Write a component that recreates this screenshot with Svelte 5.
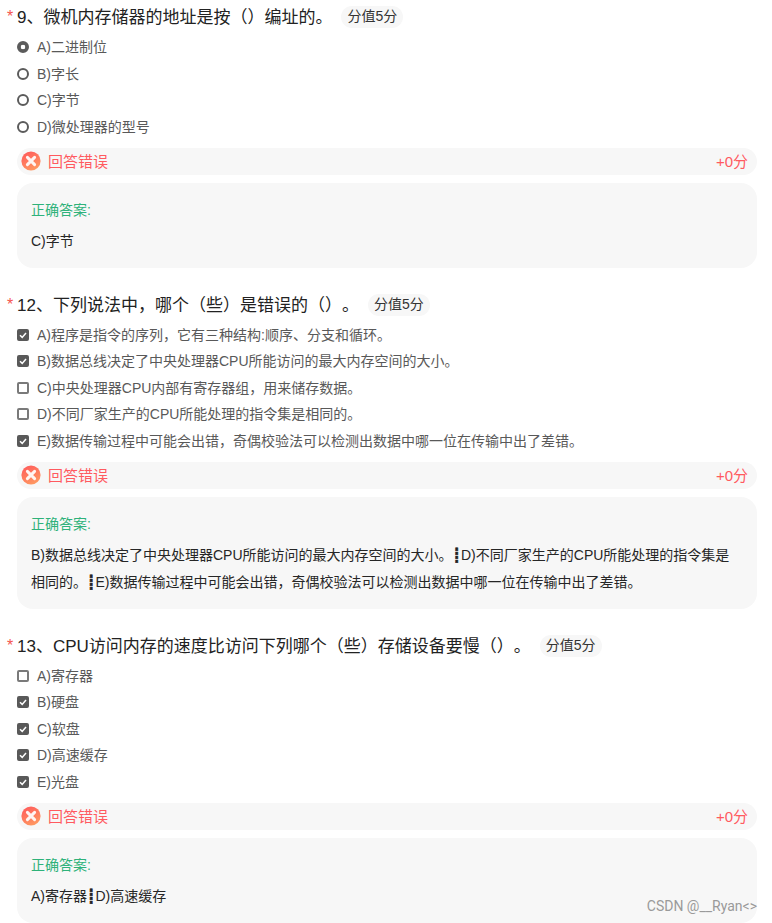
<script>
    const questions = [
        {
            no: 9,
            title: '微机内存储器的地址是按（）编址的。',
            type: 'radio',
            options: [
                { text: 'A)二进制位', checked: true },
                { text: 'B)字长' },
                { text: 'C)字节' },
                { text: 'D)微处理器的型号' }
            ],
            answers: ['C)字节']
        },
        {
            no: 12,
            title: '下列说法中，哪个（些）是错误的（）。',
            type: 'check',
            options: [
                { text: 'A)程序是指令的序列，它有三种结构:顺序、分支和循环。', checked: true },
                { text: 'B)数据总线决定了中央处理器CPU所能访问的最大内存空间的大小。', checked: true },
                { text: 'C)中央处理器CPU内部有寄存器组，用来储存数据。' },
                { text: 'D)不同厂家生产的CPU所能处理的指令集是相同的。' },
                { text: 'E)数据传输过程中可能会出错，奇偶校验法可以检测出数据中哪一位在传输中出了差错。', checked: true }
            ],
            answers: [
                'B)数据总线决定了中央处理器CPU所能访问的最大内存空间的大小。',
                'D)不同厂家生产的CPU所能处理的指令集是相同的。',
                'E)数据传输过程中可能会出错，奇偶校验法可以检测出数据中哪一位在传输中出了差错。'
            ]
        },
        {
            no: 13,
            title: 'CPU访问内存的速度比访问下列哪个（些）存储设备要慢（）。',
            type: 'check',
            options: [
                { text: 'A)寄存器' },
                { text: 'B)硬盘', checked: true },
                { text: 'C)软盘', checked: true },
                { text: 'D)高速缓存', checked: true },
                { text: 'E)光盘', checked: true }
            ],
            answers: ['A)寄存器', 'D)高速缓存']
        }
    ];
</script>

<div class="page">
    {#each questions as q}
        <section class="question">
            <div class="title">
                <span class="star">*</span>
                <span class="name">{q.no}、{q.title}</span>
                <span class="score">分值5分</span>
            </div>

            <div class="options">
                {#each q.options as opt}
                    <div class="option">
                        {#if q.type === 'radio'}
                            <span class="radio" class:on={opt.checked}></span>
                        {:else}
                            <span class="box" class:on={opt.checked}>
                                {#if opt.checked}
                                    <svg viewBox="0 0 12 12" width="12" height="12">
                                        <path d="M3 6.3 L5.2 8.4 L9 3.9" fill="none" stroke="#fff" stroke-width="1.5" />
                                    </svg>
                                {/if}
                            </span>
                        {/if}
                        <span class="opt-text">{opt.text}</span>
                    </div>
                {/each}
            </div>

            <div class="result">
                <span class="verdict">
                    <svg class="wrong" viewBox="0 0 20 20" width="20" height="20">
                        <defs>
                            <linearGradient id="wrong-{q.no}" x1="0.2" y1="0" x2="0.7" y2="1">
                                <stop offset="0" stop-color="#ff5b5b" />
                                <stop offset="1" stop-color="#ff9b62" />
                            </linearGradient>
                        </defs>
                        <circle cx="10" cy="10" r="9.6" fill="url(#wrong-{q.no})" />
                        <path d="M6.4 6.4 L13.6 13.6 M13.6 6.4 L6.4 13.6" stroke="#fff" stroke-width="3" stroke-linecap="round" opacity="0.92" />
                    </svg>
                    <span class="lift">回答错误</span>
                </span>
                <span class="lift">+0分</span>
            </div>

            <div class="answer">
                <div class="label">正确答案:</div>
                <div class="text">
                    {#each q.answers as a, i}{#if i > 0}<span class="sep">┋</span>{/if}{a}{/each}
                </div>
            </div>
        </section>
    {/each}
    <span class="mark">CSDN @__Ryan&lt;&gt;</span>
</div>

<style>
    :global(body) {
        margin: 0;
        background: #fff;
    }

    .page {
        position: relative;
        width: 772px;
        height: 923px;
        overflow: hidden;
        padding: 5px 15px 0 17px;
        box-sizing: border-box;
        font-family: "Liberation Sans", "Noto Sans CJK SC", sans-serif;
        color: #262626;
        text-spacing-trim: space-all;
    }

    .question {
        margin-bottom: 24.5px;
    }

    .title {
        position: relative;
        display: flex;
        align-items: center;
        height: 24px;
        font-size: 17px;
        color: #222;
    }

    .name {
        padding-bottom: 3px;
    }

    .star {
        position: absolute;
        left: -10px;
        top: 3px;
        color: #f5554f;
        font-size: 16px;
    }

    .score {
        margin-left: 9px;
        padding: 0 6px 2px;
        height: 20px;
        line-height: 20px;
        border-radius: 11px;
        background: #f7f7f7;
        font-size: 14px;
        color: #333;
    }

    .options {
        margin-top: 5px;
    }

    .option {
        display: flex;
        align-items: center;
        gap: 8px;
        height: 26.5px;
        font-size: 14px;
        color: #595959;
    }

    .opt-text {
        padding-bottom: 2px;
    }

    .radio {
        width: 8px;
        height: 8px;
        border: 2px solid #5b5b5b;
        border-radius: 50%;
        flex: none;
        background: #fff;
    }

    .radio.on {
        background: radial-gradient(circle, #fff 0 2px, #5b5b5b 2.6px);
    }

    .box {
        width: 8px;
        height: 8px;
        border: 2px solid #7a7a7a;
        border-radius: 2px;
        flex: none;
        position: relative;
    }

    .box.on {
        background: #595959;
        border-color: #595959;
    }

    .box svg {
        position: absolute;
        left: -2px;
        top: -2px;
    }

    .result {
        display: flex;
        align-items: center;
        justify-content: space-between;
        height: 27px;
        margin-top: 8px;
        padding: 0 9px 0 4px;
        border-radius: 14px;
        background: #f7f7f7;
        font-size: 15px;
        color: #ff5a5f;
    }

    .verdict {
        display: flex;
        align-items: center;
        gap: 7px;
    }

    .lift {
        padding-bottom: 2px;
    }

    .wrong {
        flex: none;
        margin-top: -1px;
    }

    .answer {
        margin-top: 8px;
        padding: 17px 14px 13px;
        border-radius: 16px;
        background: #f7f7f7;
    }

    .label {
        font-size: 14px;
        line-height: 20px;
        color: #2eb27a;
    }

    .text {
        margin-top: 8px;
        font-size: 14px;
        line-height: 27px;
        color: #262626;
    }

    .sep {
        font-family: "DejaVu Sans", sans-serif;
        font-weight: bold;
        color: #222;
        -webkit-text-stroke: 0.6px #222;
    }

    .mark {
        position: absolute;
        right: 15px;
        top: 898px;
        font-family: Roboto, sans-serif;
        font-size: 14px;
        color: #9a9a9a;
    }
</style>
